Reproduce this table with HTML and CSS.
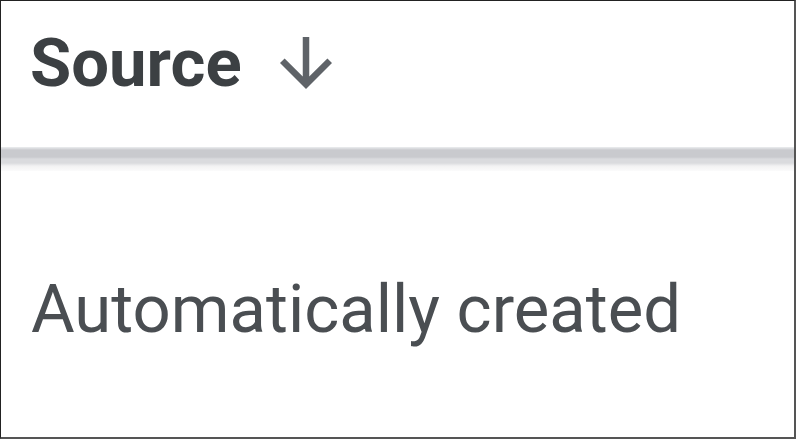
FILE: index.html
```html
<!DOCTYPE html>
<html lang="en">
<head>
    <meta charset="UTF-8">
    <meta name="viewport" content="width=device-width, initial-scale=1.0">
    <title>Source column</title>
    <link rel="stylesheet" href="styles.css">
</head>
<body>
    <div class="table">
        <div class="head">
            <span class="head-label">Source</span>
            <svg class="sort-icon" viewBox="0 0 24 24"><path d="M20 12l-1.41-1.41L13 16.17V4h-2v12.17l-5.58-5.59L4 12l8 8 8-8z"/></svg>
        </div>
        <div class="divider"></div>
        <div class="cell">Automatically created</div>
    </div>
</body>
</html>
```

FILE: styles.css
```css
* { margin: 0; padding: 0; box-sizing: border-box; }
body { background: #fff; font-family: Roboto, "Liberation Sans", sans-serif; }
.table {
    width: 796px; height: 439px;
    border-top: 1px solid #222; border-left: 1px solid #222;
    border-right: 2px solid #555; border-bottom: 2px solid #555;
    background: #fff;
    overflow: hidden;
}
.head {
    height: 146px;
    padding: 29px 0 0 29px;
    display: flex;
    align-items: flex-start;
}
.head-label {
    font-size: 67px;
    font-weight: 700;
    line-height: 67px;
    color: #3c4043;
}
.sort-icon {
    width: 78px; height: 78px;
    margin-left: 25px;
    margin-top: -6px;
    fill: #5f6368;
}
.divider {
    height: 24px;
    background: linear-gradient(#eceef0 0px, #c9cace 3px, #c9cace 10px, #dadbde 12px, #dadbde 16px, #f2f2f3 19px, #fbfbfb 24px);
}
.cell {
    padding: 105px 0 0 30px;
    font-size: 67px;
    line-height: 67px;
    color: #4a4e52;
}
```
